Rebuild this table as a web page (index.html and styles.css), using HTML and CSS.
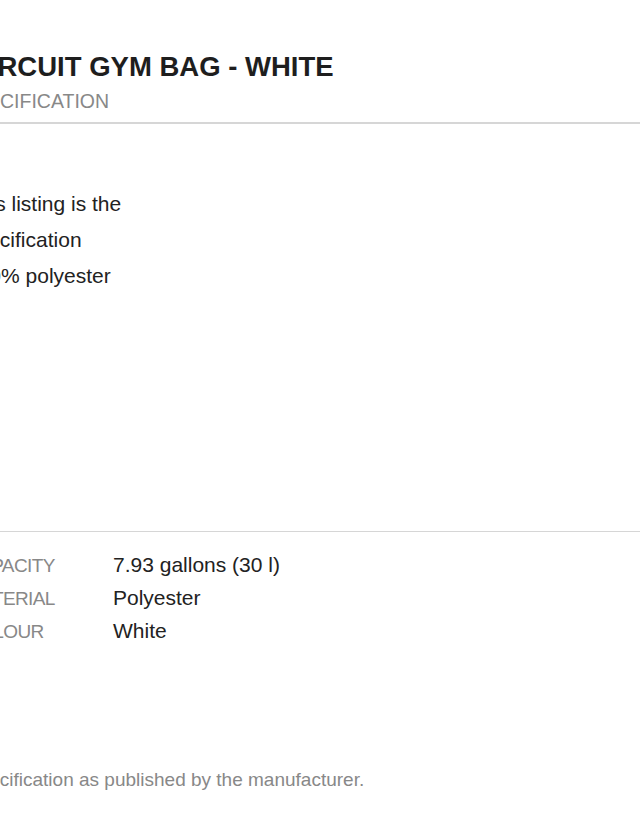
FILE: index.html
```html
<!DOCTYPE html>
<html lang="en">
<head>
  <meta charset="UTF-8">
  <meta name="viewport" content="width=device-width, initial-scale=1.0">
  <title>Circuit Gym Bag - White - Specification</title>
  <link rel="stylesheet" href="styles.css">
</head>
<body>
  <div class="sheet">
    <header class="sheet-head">
      <h1>CIRCUIT GYM BAG - WHITE</h1>
      <p class="kicker">SPECIFICATION</p>
    </header>

    <!-- short description -->
    <section class="summary">
      <p>This listing is the<br>specification<br>100% polyester</p>
    </section>

    <!-- spec table -->
    <section class="specs">
      <div class="spec-row">
        <span class="spec-label">CAPACITY</span>
        <span class="spec-value">7.93 gallons (30 l)</span>
      </div>
      <div class="spec-row">
        <span class="spec-label">MATERIAL</span>
        <span class="spec-value">Polyester</span>
      </div>
      <div class="spec-row">
        <span class="spec-label">COLOUR</span>
        <span class="spec-value">White</span>
      </div>
    </section>

    <footer class="note">
      <p>Specification as published by the manufacturer.</p>
    </footer>
  </div>
</body>
</html>
```

FILE: styles.css
```css
/* base */
body {
  margin: 0;
  padding: 0;
  background-color: #fff;
  color: #222;
  font-family: 'Liberation Sans', Arial, sans-serif;
  overflow: hidden;
}

p {
  margin: 0;
}

/* the sheet runs off the left edge of the window */
.sheet {
  margin-left: -30px;
  padding-top: 51px;
}

.sheet-head {
  border-bottom: 2px solid #d6d6d6;
  padding-bottom: 9px;
}

.sheet-head h1 {
  margin: 0;
  font-size: 27.5px;
  line-height: 32px;
  font-weight: bold;
  color: #1e1e1e;
}

.kicker {
  margin: 6px 0 0 -9px;
  font-size: 19.5px;
  line-height: 24px;
  color: #888;
}

/* description */
.summary {
  padding: 62px 0 237px;
  font-size: 21px;
  line-height: 36px;
  color: #222;
}

.summary p {
  margin-left: -4px;
}

/* spec table */
.specs {
  border-top: 1px solid #d6d6d6;
  padding-top: 16px;
}

.spec-row {
  display: grid;
  grid-template-columns: 143px 1fr;
  align-items: baseline;
  height: 33px;
  line-height: 33px;
}

.spec-label {
  margin-left: -4px;
  font-size: 19px;
  letter-spacing: -0.6px;
  color: #888;
}

.spec-value {
  font-size: 21px;
  color: #222;
}

.note {
  margin: 121px 0 0 -4px;
  font-size: 19px;
  line-height: 24px;
  color: #888;
}
```
